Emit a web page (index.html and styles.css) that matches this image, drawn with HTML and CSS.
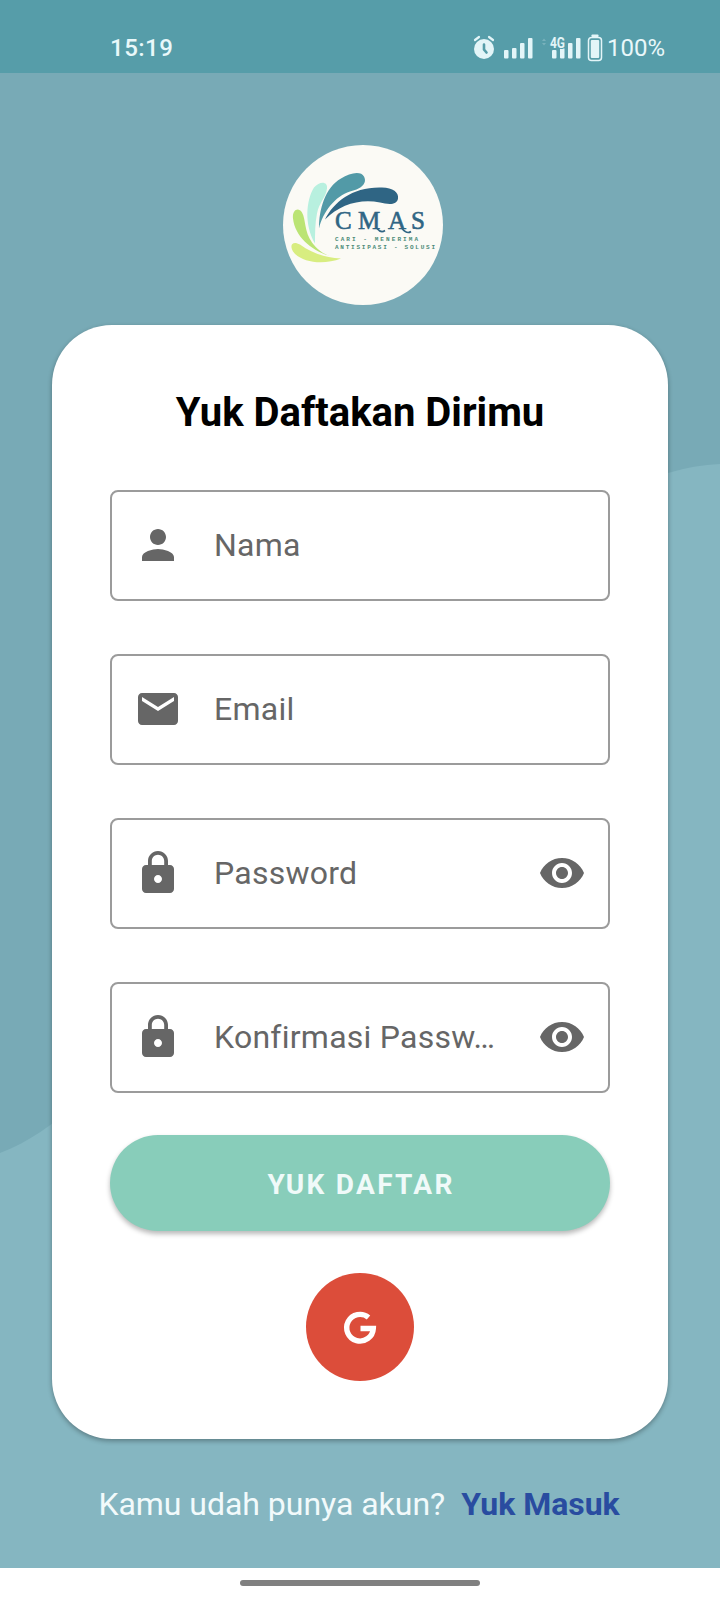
FILE: index.html
```html
<!DOCTYPE html>
<html lang="id">
<head>
<meta charset="utf-8">
<title>Yuk Daftar</title>
<link rel="stylesheet" href="styles.css">
</head>
<body>
<svg class="defs" width="0" height="0" aria-hidden="true">
  <symbol id="person" viewBox="0 0 24 24"><path d="M12 12c2.21 0 4-1.79 4-4s-1.79-4-4-4-4 1.79-4 4 1.79 4 4 4zm0 2c-2.67 0-8 1.34-8 4v2h16v-2c0-2.66-5.33-4-8-4z"/></symbol>
  <symbol id="mail" viewBox="0 0 24 24"><path d="M20 4H4c-1.1 0-1.99.9-1.99 2L2 18c0 1.1.9 2 2 2h16c1.1 0 2-.9 2-2V6c0-1.1-.9-2-2-2zm0 4l-8 5-8-5V6l8 5 8-5v2z"/></symbol>
  <symbol id="lock" viewBox="0 0 24 24"><path d="M18 8h-1V6c0-2.76-2.24-5-5-5S7 3.24 7 6v2H6c-1.1 0-2 .9-2 2v10c0 1.1.9 2 2 2h12c1.1 0 2-.9 2-2V10c0-1.1-.9-2-2-2zm-6 9c-1.1 0-2-.9-2-2s.9-2 2-2 2 .9 2 2-.9 2-2 2zm3.100-9H8.900V6c0-1.710 1.390-3.100 3.100-3.100 1.710 0 3.100 1.390 3.100 3.100v2z"/></symbol>
  <symbol id="eye" viewBox="0 0 24 24"><path d="M12 4.500C7 4.500 2.730 7.610 1 12c1.730 4.390 6 7.500 11 7.500s9.270-3.110 11-7.500c-1.730-4.390-6-7.500-11-7.500zM12 17c-2.760 0-5-2.240-5-5s2.240-5 5-5 5 2.240 5 5-2.240 5-5 5zm0-8c-1.660 0-3 1.340-3 3s1.340 3 3 3 3-1.340 3-3-1.340-3-3-3z"/></symbol>
</svg>
<div class="screen">
  <svg class="backdrop" viewBox="0 0 720 1495" preserveAspectRatio="none" aria-hidden="true">
    <path d="M0 1080C30 1069 52 1051 80 1029C300 850 420 440 668 400Q694 392 720 391V1495H0Z" fill="#85b6c1"/>
  </svg>
  <header class="status">
    <span class="time">15:19</span>
    <div class="tray">
      <svg class="signals" viewBox="0 0 134 30" aria-hidden="true">
        <g fill="#e3f5f8">
          <circle cx="11" cy="16" r="10"/>
          <path d="M2 7L6 4M20 7L16 4" stroke="#e3f5f8" stroke-width="2.200" stroke-linecap="round"/>
          <path d="M11 11.500V16.500l2.500 3" fill="none" stroke="#569da9" stroke-width="2.600" stroke-linecap="round"/>
          <rect x="31" y="17" width="4.500" height="8.500" rx="1"/><rect x="39" y="15" width="4.500" height="10.500" rx="1"/><rect x="47" y="10" width="4.500" height="15.500" rx="1"/><rect x="55" y="5" width="4.500" height="20.500" rx="1"/>
          <rect x="79" y="17" width="4.500" height="8.500" rx="1"/><rect x="87" y="15" width="4.500" height="10.500" rx="1"/><rect x="95" y="10" width="4.500" height="15.500" rx="1"/><rect x="103" y="5" width="4.500" height="20.500" rx="1"/>
          <path d="M69 8l2-2.500L73 8zM69 10l2 2.500L73 10z" opacity=".25"/>
          <rect x="118.500" y="1.500" width="7" height="2.500" rx=".8"/>
          <rect x="117.800" y="7" width="8.400" height="18" rx="1"/>
        </g>
        <rect x="115.500" y="4.500" width="13" height="23" rx="3" fill="none" stroke="#e3f5f8" stroke-width="1.500"/>
        <text class="network" x="77" y="14.500" textLength="15" lengthAdjust="spacingAndGlyphs">4G</text>
      </svg>
      <span class="percent">100%</span>
    </div>
  </header>
  <main class="content">
    <svg class="logo" viewBox="0 0 160 160" role="img" aria-label="CMAS">
      <circle cx="80" cy="80" r="80" fill="#fbfaf5"/>
      <g transform="translate(1 .5)">
        <path d="M35 83C35 64 41 42 57 33C66 27 77 25 80 31C84 39 75 44 66 46C51 51 39 66 35 83Z" fill="#529aa7"/>
        <path d="M41 74C50 56 69 41 98 42C109 42 115 47 114 53C113 60 104 59 96 57C76 53 56 59 41 74Z" fill="#2f6584"/>
        <path d="M31 98C20 79 22 55 30 42C36 35 44 36 43 43C42 52 35 57 33 68C31 78 31 88 31 98Z" fill="#b8f0df"/>
        <path d="M47 111C27 105 11 91 9 73C8 65 14 61 18 67C22 74 20 86 28 97C33 104 40 109 47 111Z" fill="#bbe474"/>
        <path d="M57 113C39 120 17 117 9 106C5 99 9 95 16 99C27 107 40 112 57 113Z" fill="#d8ed80"/>
        <text class="brand" y="83.500"><tspan x="51">C</tspan><tspan x="74">M</tspan><tspan x="104">A</tspan><tspan x="127">S</tspan></text>
        <path d="M93 83q4 5 8 2M118 83q5 6 9 3" fill="none" stroke="#2f6584" stroke-width="1.600"/>
        <text class="motto" x="51" y="95" textLength="83">CARI - MENERIMA</text>
        <text class="motto" x="51" y="103" textLength="100">ANTISIPASI - SOLUSI</text>
      </g>
    </svg>
    <form class="card">
      <h1 class="title">Yuk Daftakan Dirimu</h1>
      <div class="fields">
        <div class="field"><svg class="icon"><use href="#person"/></svg><span class="label">Nama</span></div>
        <div class="field"><svg class="icon"><use href="#mail"/></svg><span class="label">Email</span></div>
        <div class="field"><svg class="icon"><use href="#lock"/></svg><span class="label">Password</span><svg class="icon"><use href="#eye"/></svg></div>
        <div class="field"><svg class="icon"><use href="#lock"/></svg><span class="label">Konfirmasi Passw…</span><svg class="icon"><use href="#eye"/></svg></div>
      </div>
      <button class="submit" type="button">YUK DAFTAR</button>
      <svg class="google" viewBox="0 0 108 108" role="img" aria-label="Google">
        <circle cx="54" cy="54" r="54" fill="#dc4d3a"/>
        <path d="M62.500 44.500A13.300 13.300 0 1 0 67.300 55.500H54.500" fill="none" stroke="#fff" stroke-width="5.400"/>
      </svg>
    </form>
    <p class="footer"><span>Kamu udah punya akun?</span><a class="login">Yuk Masuk</a></p>
  </main>
  <div class="nav"><div class="handle"></div></div>
</div>
</body>
</html>
```
FILE: styles.css
```css
* { box-sizing: border-box; }
body { margin: 0; font-family: Roboto, "Liberation Sans", sans-serif; }
.defs { position: absolute; }
.screen {
  position: relative;
  display: flex;
  flex-direction: column;
  width: 720px;
  height: 1600px;
  overflow: hidden;
  background: #78aab6;
}
.backdrop { position: absolute; top: 73px; left: 0; width: 720px; height: 1495px; }
.status {
  position: relative;
  display: flex;
  justify-content: space-between;
  height: 73px;
  padding: 33px 54px 0 110px;
  background: #569da9;
  color: #e9f8fa;
  font-size: 24px;
  line-height: 31px;
}
.time { letter-spacing: .5px; font-weight: 500; }
.tray { display: flex; }
.signals { width: 134px; height: 30px; }
.percent { width: 59px; white-space: nowrap; }
.network { font: 700 14.5px Roboto, sans-serif; fill: #e3f5f8; stroke: #569da9; stroke-width: 2px; paint-order: stroke; }
.content {
  position: relative;
  display: flex;
  flex-direction: column;
  align-items: center;
  height: 1495px;
  padding-top: 72px;
}
.logo { width: 160px; height: 160px; margin-left: 5px; }
.brand { font: 25px "Liberation Serif", serif; fill: #2f6584; stroke: #2f6584; stroke-width: .6px; }
.motto { font: 700 6px "Liberation Mono", monospace; fill: #4c8b78; }
.card {
  display: flex;
  flex-direction: column;
  align-items: center;
  width: 616px;
  height: 1114px;
  margin-top: 20px;
  padding: 64px 58px 0;
  border-radius: 60px;
  background: #fff;
  box-shadow: 0 2px 5px rgba(0, 0, 0, .32);
}
.title { margin: 0; font-size: 40px; line-height: 48px; font-weight: 700; color: #000; white-space: nowrap; }
.fields { display: flex; flex-direction: column; gap: 53px; width: 500px; margin-top: 53px; }
.field {
  display: flex;
  align-items: center;
  height: 111px;
  padding: 0 22px 1px;
  border: 2px solid #9b9b9b;
  border-radius: 8px;
}
.icon { flex: none; width: 48px; height: 48px; fill: #666; }
.label { flex: 1; padding-left: 32px; font-size: 32px; line-height: 40px; letter-spacing: .25px; color: #666; white-space: nowrap; }
.submit {
  width: 500px;
  height: 96px;
  margin-top: 42px;
  padding: 2px 0 0 2px;
  border: 0;
  border-radius: 48px;
  background: #88cdba;
  box-shadow: 0 3px 5px rgba(0, 0, 0, .28);
  color: #f0faf9;
  font: 700 28px Roboto, sans-serif;
  letter-spacing: 2.300px;
}
.google { width: 108px; height: 108px; margin-top: 42px; }
.footer { display: flex; gap: 16px; margin: 46px 2px 0 0; font-size: 32px; line-height: 38px; letter-spacing: -.03px; color: #f2fafb; white-space: nowrap; }
.login { color: #294ca0; font-weight: 700; }
.nav { position: relative; height: 32px; padding-top: 12px; background: #fff; }
.handle { width: 240px; height: 6px; margin: 0 auto; border-radius: 3px; background: #808080; }
```
